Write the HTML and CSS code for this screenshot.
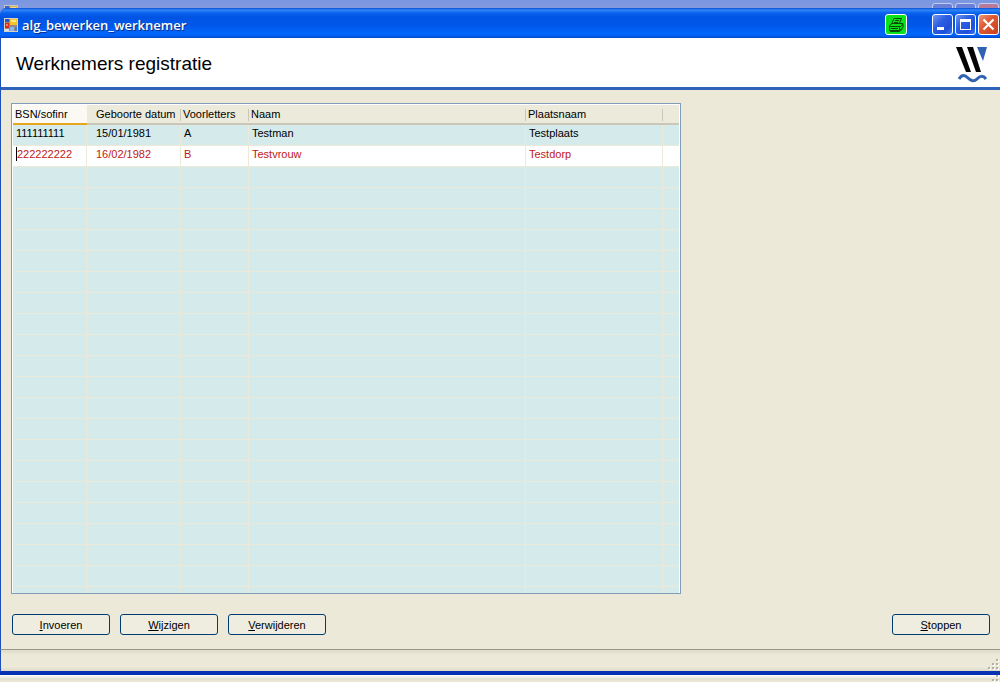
FILE: index.html
```html
<!DOCTYPE html>
<html lang="nl">
<head>
<meta charset="utf-8">
<title>alg_bewerken_werknemer</title>
<link rel="stylesheet" href="styles.css">
</head>
<body>
<svg class="defs" width="0" height="0" aria-hidden="true">
  <symbol id="form-icon" viewBox="0 0 14 14">
    <rect width="14" height="14" fill="#d8d2c0"/>
    <rect x="1" y="1" width="12" height="12" fill="#8f8a86"/>
    <rect x="1" y="1" width="4" height="3" fill="#2c55c4"/>
    <rect x="6" y="1" width="7" height="6" fill="#f5c12c"/>
    <rect x="7" y="2" width="5" height="2" fill="#ffe88a"/>
    <rect x="1" y="5" width="4" height="5" fill="#d92a1c"/>
    <rect x="2" y="6" width="2" height="2" fill="#f47c5c"/>
    <rect x="1" y="11" width="4" height="2" fill="#d9e2f2"/>
    <rect x="6" y="9" width="4" height="4" fill="#8fb4f4"/>
    <rect x="11" y="9" width="2" height="4" fill="#4a78dc"/>
  </symbol>
  <symbol id="grip" viewBox="0 0 12 12">
    <path d="M9 1h2v2H9zM5 5h2v2H5zM9 5h2v2H9zM1 9h2v2H1zM5 9h2v2H5zM9 9h2v2H9z" fill="#fff"/>
    <path d="M8 0h2v2H8zM4 4h2v2H4zM8 4h2v2H8zM0 8h2v2H0zM4 8h2v2H4zM8 8h2v2H8z" fill="#b5b19f"/>
  </symbol>
</svg>
<div class="back-title">
  <svg class="form-icon" aria-hidden="true"><use href="#form-icon"/></svg>
  <span class="back-box"></span><span class="back-box"></span><span class="back-box back-close"></span>
</div>
<div class="window">
  <header class="titlebar">
    <svg class="form-icon" aria-hidden="true"><use href="#form-icon"/></svg>
    <h1 class="caption">alg_bewerken_werknemer</h1>
    <button class="print" aria-label="Afdrukken">
      <svg width="18" height="18" viewBox="0 0 18 18" fill="none" stroke="#064a06">
        <path d="M4.500 8 7 2.500h7.500L12 8M8 4.500h4M7 6.500h4M2.500 9.500 5 7.500h11l-2 3H2.500zM2.500 10.500v4h10l3.500-3V8M12.500 14v-4M4 12.500h7M3.500 14.500v1h9l3-2.500"/>
      </svg>
    </button>
    <button class="box" aria-label="Minimaliseren"><svg width="17" height="17" viewBox="0 0 17 17"><path d="M3 11h7v3H3z" fill="#fff"/></svg></button>
    <button class="box" aria-label="Maximaliseren"><svg width="17" height="17" viewBox="0 0 17 17"><path d="M3 3h11v11H3zM4 6v7h9V6z" fill="#fff" fill-rule="evenodd"/></svg></button>
    <button class="box close" aria-label="Sluiten"><svg width="17" height="17" viewBox="0 0 17 17"><path d="m3.500 3.500 10 10M13.500 3.500l-10 10" stroke="#fff" stroke-width="2.200"/></svg></button>
  </header>
  <div class="banner">
    <h2 class="heading">Werknemers registratie</h2>
    <svg class="logo" width="32" height="38" viewBox="0 0 32 38" role="img" aria-label="Logo">
      <path d="M0 2h6l9 25h-5zM11 2h6l8 25h-5z" fill="#050505"/>
      <path d="M21 2h10l-4 14z" fill="#2f62b0"/>
      <path d="M3 34c3-5 6-4 9-1s6 4 9 1 6-4 9 0" fill="none" stroke="#2f62b0" stroke-width="3"/>
    </svg>
  </div>
  <main class="content">
    <div class="grid">
      <table>
        <colgroup><col class="c-bsn"><col class="c-date"><col class="c-initials"><col class="c-name"><col class="c-place"><col class="c-rest"></colgroup>
        <thead><tr><th class="sorted">BSN/sofinr</th><th class="date">Geboorte datum</th><th>Voorletters</th><th>Naam</th><th>Plaatsnaam</th><th></th></tr></thead>
        <tbody>
          <tr><td>111111111</td><td class="date">15/01/1981</td><td>A</td><td>Testman</td><td>Testplaats</td><td></td></tr>
          <tr class="current"><td><input class="edit" aria-label="BSN/sofinr" value="222222222"></td><td class="date">16/02/1982</td><td>B</td><td>Testvrouw</td><td>Testdorp</td><td></td></tr>
          <tr><td></td><td></td><td></td><td></td><td></td><td></td></tr>
          <tr><td></td><td></td><td></td><td></td><td></td><td></td></tr>
          <tr><td></td><td></td><td></td><td></td><td></td><td></td></tr>
          <tr><td></td><td></td><td></td><td></td><td></td><td></td></tr>
          <tr><td></td><td></td><td></td><td></td><td></td><td></td></tr>
          <tr><td></td><td></td><td></td><td></td><td></td><td></td></tr>
          <tr><td></td><td></td><td></td><td></td><td></td><td></td></tr>
          <tr><td></td><td></td><td></td><td></td><td></td><td></td></tr>
          <tr><td></td><td></td><td></td><td></td><td></td><td></td></tr>
          <tr><td></td><td></td><td></td><td></td><td></td><td></td></tr>
          <tr><td></td><td></td><td></td><td></td><td></td><td></td></tr>
          <tr><td></td><td></td><td></td><td></td><td></td><td></td></tr>
          <tr><td></td><td></td><td></td><td></td><td></td><td></td></tr>
          <tr><td></td><td></td><td></td><td></td><td></td><td></td></tr>
          <tr><td></td><td></td><td></td><td></td><td></td><td></td></tr>
          <tr><td></td><td></td><td></td><td></td><td></td><td></td></tr>
          <tr><td></td><td></td><td></td><td></td><td></td><td></td></tr>
          <tr><td></td><td></td><td></td><td></td><td></td><td></td></tr>
          <tr><td></td><td></td><td></td><td></td><td></td><td></td></tr>
          <tr><td></td><td></td><td></td><td></td><td></td><td></td></tr>
          <tr><td></td><td></td><td></td><td></td><td></td><td></td></tr>
        </tbody>
      </table>
    </div>
    <div class="actions">
      <button class="btn"><u>I</u>nvoeren</button>
      <button class="btn"><u>W</u>ijzigen</button>
      <button class="btn"><u>V</u>erwijderen</button>
      <button class="btn stop"><u>S</u>toppen</button>
    </div>
  </main>
  <footer class="status"><svg width="12" height="12" aria-hidden="true"><use href="#grip"/></svg></footer>
</div>
<div class="back-status"><svg width="12" height="12" aria-hidden="true"><use href="#grip"/></svg></div>
</body>
</html>
```
FILE: styles.css
```css
* { box-sizing: border-box; }
body {
  margin: 0;
  height: 100vh;
  display: flex;
  flex-direction: column;
  overflow: hidden;
  background: #7d97e0;
  color: #000;
  font: 11px/14px "Liberation Sans", Arial, sans-serif;
}
button, input { font: inherit; color: inherit; }
.defs { position: absolute; }
.form-icon { width: 14px; height: 14px; flex: none; }

.back-title {
  flex: none;
  display: flex;
  gap: 2px;
  height: 8px;
  padding: 5px 1px 0 4px;
  overflow: hidden;
  background: linear-gradient(#7a96df, #829ae0);
}
.back-title .form-icon { margin-right: auto; opacity: 0.8; }
.back-box {
  width: 21px;
  height: 21px;
  margin-top: -2px;
  border: 1px solid #c3cdf0;
  border-radius: 3px;
  background: #6a80d8;
}
.back-close { background: #b77a9a; }

.window {
  flex: 1;
  min-height: 0;
  display: flex;
  flex-direction: column;
  border-bottom: 4px solid #0831b4;
}
.titlebar {
  flex: none;
  display: flex;
  align-items: center;
  gap: 2px;
  height: 30px;
  padding: 3px 1px 0 4px;
  border-top-left-radius: 6px;
  background: linear-gradient(#0b4fd0 0, #2f86f8 2px, #0a62ee 5px, #0054e3 9px, #0058ea 18px, #0266fc 25px, #0260f4 28px, #0242c0 30px);
}
.caption {
  flex: 1;
  margin: 0 0 0 2px;
  color: #fff;
  font: 600 13px/18px "Open Sans", "Noto Sans", sans-serif;
  text-shadow: 1px 1px #0a2f86;
}
.titlebar button {
  display: grid;
  place-items: center;
  width: 21px;
  height: 21px;
  padding: 0;
  border: 1px solid #fff;
  border-radius: 3px;
}
.titlebar .box { background: linear-gradient(135deg, #7295ee, #2c5ee4 40%, #1f4fd8 75%, #3b78f4); }
.titlebar .close { background: linear-gradient(135deg, #f0987c, #df5a34 40%, #c9401c); }
.titlebar .print { width: 22px; margin-right: 23px; background: #0be21b; }

.banner, .content, .status { border-left: 1px solid #1c50b8; }
.banner {
  flex: none;
  display: flex;
  align-items: center;
  justify-content: space-between;
  height: 52px;
  padding: 2px 12px 0 15px;
  border-bottom: 3px solid #2f62b8;
  background: #fff;
}
.heading { margin: 0; font-size: 19px; line-height: 24px; font-weight: normal; }

.content {
  flex: 1;
  min-height: 0;
  display: flex;
  flex-direction: column;
  gap: 20px;
  padding: 13px 10px 14px;
  background: #ece9d8;
}
.grid {
  flex: 1;
  min-height: 0;
  max-width: 670px;
  overflow: hidden;
  padding: 1px;
  border: 1px solid #7f9db9;
  background: #fff;
}
.grid table {
  width: 100%;
  table-layout: fixed;
  border-spacing: 0;
}
.c-bsn { width: 74px; }
.c-date { width: 94px; }
.c-initials { width: 68px; }
.c-name { width: 277px; }
.c-place { width: 137px; }
th {
  height: 20px;
  padding: 0 2px;
  border-bottom: 2px solid #cbc7b8;
  background: linear-gradient(#cbc7b8, #cbc7b8) right 4px / 1px 12px no-repeat #ebeadb;
  font-weight: normal;
  text-align: left;
  white-space: nowrap;
}
th.sorted { border-bottom-color: #e8a520; background: #faf9f4; }
td {
  height: 21px;
  padding: 0 3px 4px;
  border-right: 1px solid #ece9d8;
  border-bottom: 1px solid #ece9d8;
  background: #d5eaea;
}
th:last-child { background: #ebeadb; }
td:last-child { border-right: 0; }
th.date, td.date { padding-left: 9px; }
.current td { background: #fff; color: #c01818; }
.edit {
  display: block;
  width: 100%;
  height: 14px;
  padding: 0;
  border: 0;
  border-left: 1px solid #000;
  background: none;
}

.actions { flex: none; display: flex; gap: 10px; padding-left: 1px; }
.btn {
  width: 98px;
  height: 21px;
  padding: 0;
  border: 1px solid #003c74;
  border-radius: 3px;
  background: #efede0;
}
.stop { margin-left: auto; }

.status, .back-status {
  flex: none;
  display: flex;
  justify-content: flex-end;
  align-items: flex-end;
  overflow: hidden;
}
.status {
  height: 22px;
  border-top: 1px solid #9a978a;
  background: linear-gradient(#dedbca, #ece9d8 5px, #ece9d8 17px, #dcd9c8);
}
.back-status { height: 7px; align-items: flex-start; background: linear-gradient(#fff, #e2dfd0 4px, #ece9d8); }
```
